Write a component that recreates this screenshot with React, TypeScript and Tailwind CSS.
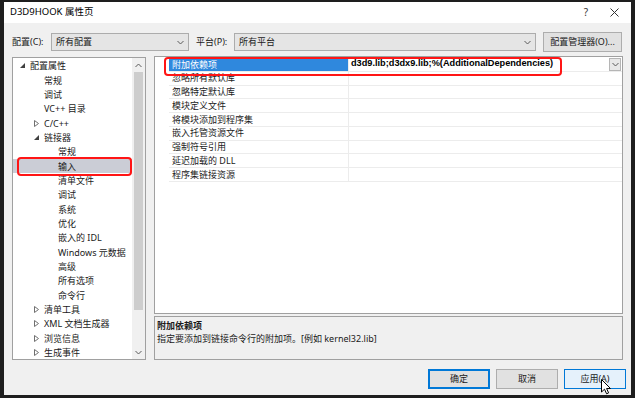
import { type ReactNode } from 'react';

type TreeItem = {
  label: string;
  level: 0 | 1 | 2;
  arrow?: 'open' | 'closed';
  selected?: boolean;
};

const treeItems: TreeItem[] = [
  { label: '配置属性', level: 0, arrow: 'open' },
  { label: '常规', level: 1 },
  { label: '调试', level: 1 },
  { label: 'VC++ 目录', level: 1 },
  { label: 'C/C++', level: 1, arrow: 'closed' },
  { label: '链接器', level: 1, arrow: 'open' },
  { label: '常规', level: 2 },
  { label: '输入', level: 2, selected: true },
  { label: '清单文件', level: 2 },
  { label: '调试', level: 2 },
  { label: '系统', level: 2 },
  { label: '优化', level: 2 },
  { label: '嵌入的 IDL', level: 2 },
  { label: 'Windows 元数据', level: 2 },
  { label: '高级', level: 2 },
  { label: '所有选项', level: 2 },
  { label: '命令行', level: 2 },
  { label: '清单工具', level: 1, arrow: 'closed' },
  { label: 'XML 文档生成器', level: 1, arrow: 'closed' },
  { label: '浏览信息', level: 1, arrow: 'closed' },
  { label: '生成事件', level: 1, arrow: 'closed' },
];

const indent = ['pl-[4px]', 'pl-[18px]', 'pl-[32px]'];

const linkerInputs = [
  '附加依赖项',
  '忽略所有默认库',
  '忽略特定默认库',
  '模块定义文件',
  '将模块添加到程序集',
  '嵌入托管资源文件',
  '强制符号引用',
  '延迟加载的 DLL',
  '程序集链接资源',
];

function Chevron({ up = false }: { up?: boolean }) {
  return (
    <svg width="7" height="5" viewBox="0 0 7 5" className={up ? 'rotate-180' : ''}>
      <path d="M0.5 1 L3.5 4 L6.5 1" fill="none" stroke="#5a5a5a" strokeWidth="1" />
    </svg>
  );
}

function TreeArrow({ kind }: { kind: 'open' | 'closed' }) {
  if (kind === 'open') {
    return (
      <svg width="5" height="5" viewBox="0 0 5 5">
        <path d="M5 0 L5 5 L0 5 Z" fill="#404040" />
      </svg>
    );
  }
  return (
    <svg width="5" height="7" viewBox="0 0 5 7">
      <path d="M0.5 0.5 L4.5 3.5 L0.5 6.5 Z" fill="none" stroke="#707070" strokeWidth="1" />
    </svg>
  );
}

function Select({ value, width }: { value: string; width: string }) {
  return (
    <div className={`${width} h-[18px] flex items-center justify-between bg-[#e5e5e5] border border-[#acacac] pl-[4px] pr-[4px]`}>
      <span>{value}</span>
      <Chevron />
    </div>
  );
}

function Button({ children, variant }: { children: ReactNode; variant?: 'default' | 'hover' }) {
  const look =
    variant === 'default'
      ? 'bg-[#e1e1e1] border-[#0078d7] shadow-[inset_0_0_0_1px_#0078d7]'
      : variant === 'hover'
        ? 'bg-[#e5f1fb] border-[#0078d7]'
        : 'bg-[#e1e1e1] border-[#adadad]';
  return (
    <div className={`h-[20px] flex items-center justify-center border ${look}`}>
      {children}
    </div>
  );
}

export default function App() {
  return (
    <div className="relative w-[635px] h-[398px] bg-[#1e1e1e] pl-[4px] pt-[2px] pr-[4px] pb-[3px] text-[9px] text-[#1a1a1a] font-['Noto_Sans','Noto_Sans_CJK_SC',sans-serif] overflow-hidden">
      <div className="w-full h-full flex flex-col bg-[#f0f0f0]">
        {/* title bar */}
        <div className="h-[21px] bg-white flex items-center pl-[6px] pr-[12px] shrink-0">
          <span className="text-[9.5px] text-black">D3D9HOOK 属性页</span>
          <span className="ml-auto text-[10px] text-[#333] mr-[22px]">?</span>
          <svg width="9" height="9" viewBox="0 0 9 9">
            <path d="M0.5 0.5 L8.5 8.5 M8.5 0.5 L0.5 8.5" stroke="#333" strokeWidth="1" />
          </svg>
        </div>

        <div className="flex-1 flex flex-col pl-[8px] pr-[8px] pt-[9px]">
          {/* configuration row */}
          <div className="h-[20px] flex items-center">
            <span className="w-[39px]">配置(C):</span>
            <Select value="所有配置" width="w-[138px]" />
            <span className="w-[38px] ml-[7px]">平台(P):</span>
            <Select value="所有平台" width="w-[302px]" />
            <div className="ml-[7px] w-[79px]">
              <Button>配置管理器(O)...</Button>
            </div>
          </div>

          <div className="flex gap-[8px] mt-[5px] h-[303px]">
            {/* tree */}
            <div className="relative w-[134px] h-full bg-white border border-[#a0a0a0] flex">
              <div className="flex-1 pt-[0.5px]">
                {treeItems.map((item, i) => (
                  <div
                    key={i}
                    className={`h-[14.35px] flex items-center ${indent[item.level]} ${item.selected ? 'bg-[#cbcdd6]' : ''}`}
                  >
                    <span className="w-[10px] mr-[3px] flex items-center justify-center">
                      {item.arrow && <TreeArrow kind={item.arrow} />}
                    </span>
                    <span className="leading-none whitespace-nowrap">{item.label}</span>
                  </div>
                ))}
              </div>
              <div className="w-[13px] h-full flex flex-col bg-[#f0f0f0]">
                <div className="h-[14px] flex items-center justify-center">
                  <Chevron up />
                </div>
                <div className="mx-[2px] h-[238px] bg-[#cdcdcd]" />
                <div className="flex-1" />
                <div className="h-[14px] flex items-center justify-center">
                  <Chevron />
                </div>
              </div>
              <div className="absolute left-[4px] top-[99px] w-[115px] h-[19px] rounded-[4px] border-[2.5px] border-[#ff1515]" />
            </div>

            {/* properties */}
            <div className="flex-1 flex flex-col gap-[2px]">
              <div className="relative -mt-[1px] h-[259px] bg-white border border-[#a0a0a0] pt-[1px]">
                {linkerInputs.map((name, i) => (
                  <div key={name} className="h-[13.75px] flex">
                    <div className="w-[14px] shrink-0" />
                    <div
                      className={`w-[180px] shrink-0 flex items-center pl-[3px] border-b border-r border-[#ececec] ${i === 0 ? 'bg-[#2f88dd] text-white' : ''}`}
                    >
                      {name}
                    </div>
                    <div className="flex-1 flex items-center pl-[2px] border-b border-[#ececec]">
                      {i === 0 && (
                        <>
                          <span className="font-bold text-black text-[9.2px] font-['Liberation_Sans',sans-serif]">
                            d3d9.lib;d3dx9.lib;%(AdditionalDependencies)
                          </span>
                          <div className="ml-auto mr-[1px] w-[12px] h-[13px] flex items-center justify-center bg-[#e8e8e8] border border-[#b5b5b5]">
                            <Chevron />
                          </div>
                        </>
                      )}
                    </div>
                  </div>
                ))}
                <div className="absolute left-[9px] top-[0px] w-[398px] h-[19px] rounded-[4px] border-[2.5px] border-[#ff1515]" />
              </div>
              <div className="h-[44px] border border-[#a0a0a0] pl-[2px] pt-[2px] leading-[13px]">
                <div className="font-bold">附加依赖项</div>
                <div>指定要添加到链接命令行的附加项。[例如 kernel32.lib]</div>
              </div>
            </div>
          </div>

          {/* footer */}
          <div className="flex justify-end gap-[6px] mt-[9px] -mr-[3px]">
            <div className="w-[62px]">
              <Button variant="default">确定</Button>
            </div>
            <div className="w-[62px]">
              <Button>取消</Button>
            </div>
            <div className="w-[62px]">
              <Button variant="hover">应用(A)</Button>
            </div>
          </div>
        </div>
      </div>

      {/* mouse pointer */}
      <svg className="absolute left-[601px] top-[379px]" width="11" height="16" viewBox="0 0 11 16">
        <path
          d="M0.5 0.5 L0.5 13 L3.5 10.2 L5.6 14.8 L7.6 13.9 L5.6 9.5 L9.5 9.5 Z"
          fill="white"
          stroke="black"
          strokeWidth="1"
          strokeLinejoin="round"
        />
      </svg>
    </div>
  );
}
